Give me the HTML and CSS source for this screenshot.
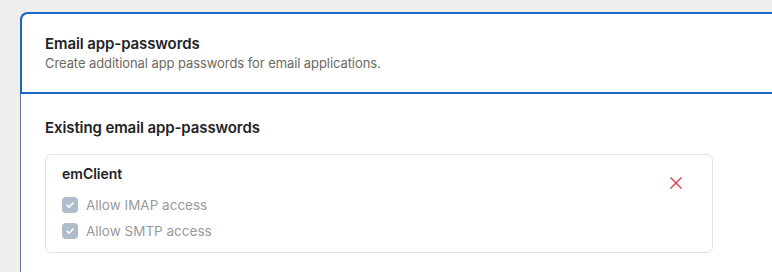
FILE: index.html
```html
<!DOCTYPE html>
<html lang="en">

<head>
    <meta charset="UTF-8">
    <title>Email app-passwords</title>
    <link rel="stylesheet" href="styles.css">
</head>

<body>
    <div class="card">
        <div class="card-header">
            <h2 class="card-title">Email app-passwords</h2>
            <p class="card-desc">Create additional app passwords for email applications.</p>
        </div>
        <div class="card-body">
            <h3 class="section-title">Existing email app-passwords</h3>
            <div class="app-item">
                <div class="app-info">
                    <div class="app-name">emClient</div>
                    <label class="perm">
                        <span class="check">
                            <svg width="10" height="10" viewBox="0 0 10 10"><path d="M2 5.2 4.1 7.2 8 3" fill="none" stroke="#fff" stroke-width="1.6" stroke-linecap="round" stroke-linejoin="round"/></svg>
                        </span>
                        Allow IMAP access
                    </label>
                    <label class="perm">
                        <span class="check">
                            <svg width="10" height="10" viewBox="0 0 10 10"><path d="M2 5.2 4.1 7.2 8 3" fill="none" stroke="#fff" stroke-width="1.6" stroke-linecap="round" stroke-linejoin="round"/></svg>
                        </span>
                        Allow SMTP access
                    </label>
                </div>
                <button class="delete-btn" title="Delete">
                    <svg width="12" height="12" viewBox="0 0 12 12"><path d="M0.5 0.5 11.5 11.5M11.5 0.5 0.5 11.5" stroke="#e5354f" stroke-width="1.4" fill="none"/></svg>
                </button>
            </div>
        </div>
    </div>
</body>

</html>
```

FILE: styles.css
```css
* {
    box-sizing: border-box;
}

body {
    margin: 0;
    padding: 12px 0 0 20px;
    background: #efeeec;
    font-family: Inter, "Noto Sans", sans-serif;
    color: #222326;
    overflow: hidden;
    height: 272px;
}

.card {
    width: 752px;
    height: 260px;
    background: #fff;
    border-left: 1px solid #5d7896;
    border-radius: 8px 0 0 0;
}

.card-header {
    margin-left: -1px;
    height: 82px;
    padding: 20px 24px 0 23px;
    border: 2px solid #1a66c9;
    border-right: none;
    border-radius: 8px 0 0 0;
}

.card-title {
    margin: 0;
    font-size: 15px;
    line-height: 20px;
    font-weight: 600;
    letter-spacing: -0.1px;
}

.card-desc {
    margin: 0;
    font-size: 13px;
    line-height: 18px;
    color: #6e6a61;
    letter-spacing: -0.08px;
}

.card-body {
    padding: 24px 24px 0;
}

.section-title {
    margin: 0 0 16px;
    font-size: 15px;
    line-height: 20px;
    font-weight: 600;
    letter-spacing: -0.1px;
}

.app-item {
    display: flex;
    width: 668px;
    padding: 9px 16px 8px;
    border: 1px solid #e2e2e4;
    border-radius: 6px;
}

.app-info {
    flex: 1;
}

.app-name {
    font-size: 14px;
    line-height: 20px;
    font-weight: 600;
    margin-bottom: 8px;
}

.perm {
    display: flex;
    align-items: center;
    gap: 8px;
    height: 26px;
    font-size: 13.5px;
    color: #9a9a9c;
}

.check {
    display: flex;
    align-items: center;
    justify-content: center;
    width: 16px;
    height: 16px;
    border-radius: 4px;
    background: #afbccc;
}

.delete-btn {
    display: flex;
    align-items: center;
    justify-content: center;
    width: 28px;
    height: 28px;
    margin: 5px 6px 0 0;
    padding: 0;
    border: none;
    background: none;
    cursor: pointer;
}
```
